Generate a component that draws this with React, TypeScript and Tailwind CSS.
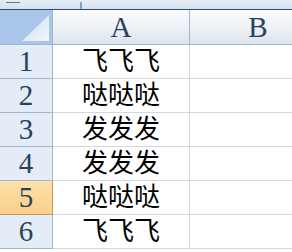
import React from 'react';

// Excel 2007 style sheet: two columns, six rows, row 5 highlighted
const rows = ['飞飞飞', '哒哒哒', '发发发', '发发发', '哒哒哒', '飞飞飞'];
const selectedRow = 5;

const serif = { fontFamily: '"Liberation Serif", "Times New Roman", serif' };
const cjk = { fontFamily: '"Liberation Serif", "Noto Sans CJK SC", sans-serif' };

export default function App() {
    return (
        <div className="w-[292px] h-[252px] overflow-hidden bg-white">
            {/* Ribbon / formula strip remnant */}
            <div className="relative h-[10px] bg-gradient-to-b from-[#e6edf5] to-[#d6e1ee] border-b border-[#2c4a7a]">
                <div className="absolute left-[6px] top-[2px] w-[14px] h-[1px] bg-[#6b7685]" />
                <div className="absolute left-[80px] top-[2px] w-[2px] h-[7px] bg-[#7fa2cf]" />
            </div>

            <div className="grid grid-cols-[53px_137px_137px] w-[327px]">
                {/* Corner cell */}
                <div className="relative h-[35px] bg-[#aac5ea] border-r border-b border-[#9eb6ce] overflow-hidden">
                    <svg className="absolute inset-0" width="52" height="34" viewBox="0 0 52 34">
                        <defs>
                            <linearGradient id="tri" x1="0" y1="0" x2="1" y2="1">
                                <stop offset="0" stopColor="#c9daf1" />
                                <stop offset="1" stopColor="#f4f8fd" />
                            </linearGradient>
                        </defs>
                        <polygon points="49,5 49,31 22,31" fill="url(#tri)" />
                    </svg>
                </div>
                {['A', 'B'].map(col => (
                    <div
                        key={col}
                        className="h-[35px] flex items-center justify-center bg-gradient-to-b from-[#f9fbfd] via-[#eef2f7] to-[#dde4ec] border-r border-b border-[#9eb6ce] text-[29px] text-[#27415f] leading-none"
                        style={serif}
                    >
                        {col}
                    </div>
                ))}

                {rows.map((text, i) => {
                    const n = i + 1;
                    const sel = n === selectedRow;
                    return (
                        <React.Fragment key={n}>
                            <div
                                className={
                                    'h-[34px] flex items-center justify-center border-r border-b text-[29px] leading-none text-[#27415f] ' +
                                    (sel
                                        ? 'bg-gradient-to-b from-[#fde2a8] to-[#f9cf88] border-[#c49a55]'
                                        : 'bg-[#e4ecf7] border-[#9eb6ce]')
                                }
                                style={serif}
                            >
                                {n}
                            </div>
                            <div
                                className="h-[34px] flex items-center justify-center border-r border-b border-[#d0d7e5] text-[26px] leading-none text-black"
                                style={cjk}
                            >
                                {text}
                            </div>
                            <div className="h-[34px] border-r border-b border-[#d0d7e5]" />
                        </React.Fragment>
                    );
                })}
            </div>
        </div>
    );
}
